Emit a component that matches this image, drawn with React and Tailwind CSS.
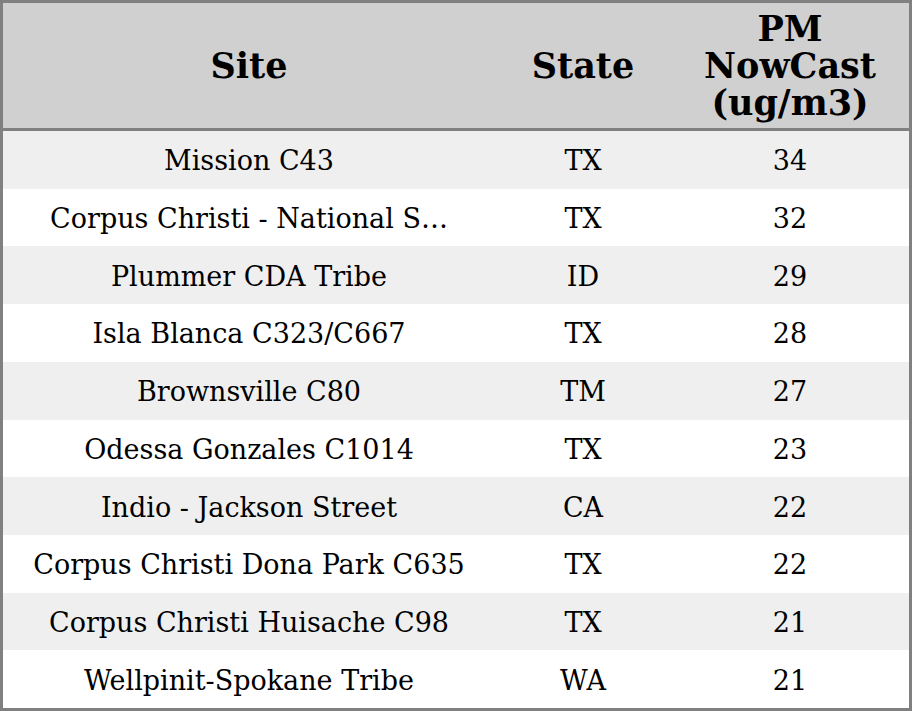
const rows = [
  ["Mission C43", "TX", "34"],
  ["Corpus Christi - National S…", "TX", "32"],
  ["Plummer CDA Tribe", "ID", "29"],
  ["Isla Blanca C323/C667", "TX", "28"],
  ["Brownsville C80", "TM", "27"],
  ["Odessa Gonzales C1014", "TX", "23"],
  ["Indio - Jackson Street", "CA", "22"],
  ["Corpus Christi Dona Park C635", "TX", "22"],
  ["Corpus Christi Huisache C98", "TX", "21"],
  ["Wellpinit-Spokane Tribe", "WA", "21"],
];

export default function App() {
  return (
    <div className="w-[912px] h-[711px] border-[3px] border-[#808080] bg-white text-black font-['DejaVu_Serif',serif] flex flex-col">
      {/* header */}
      <div className="grid grid-cols-[492px_176px_238px] h-[128px] shrink-0 bg-[#d0d0d0] border-b-[3px] border-[#808080] font-bold text-[35px] leading-[37px]">
        <div className="flex items-center justify-center">Site</div>
        <div className="flex items-center justify-center">State</div>
        <div className="flex items-center justify-center text-center">
          PM<br />NowCast<br />(ug/m3)
        </div>
      </div>

      {/* rows */}
      <div className="flex-1 flex flex-col">
        {rows.map((r, i) => (
          <div
            key={i}
            className={`flex-1 grid grid-cols-[492px_176px_238px] items-center pt-[2px] text-[27px] leading-none ${
              i % 2 === 0 ? "bg-[#efefef]" : "bg-white"
            }`}
          >
            <div className="text-center whitespace-nowrap">{r[0]}</div>
            <div className="text-center">{r[1]}</div>
            <div className="text-center">{r[2]}</div>
          </div>
        ))}
      </div>
    </div>
  );
}
